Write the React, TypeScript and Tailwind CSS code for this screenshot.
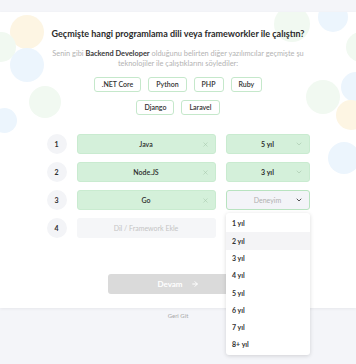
import { X, ChevronDown, ArrowRight } from "lucide-react";

const suggestions = [
  [".NET Core", "Python", "PHP", "Ruby"],
  ["Django", "Laravel"],
];

const rows = [
  { n: 1, lang: "Java", years: "5 yıl" },
  { n: 2, lang: "Node.JS", years: "3 yıl" },
  { n: 3, lang: "Go", years: null },
];

const yearOptions = ["1 yıl", "2 yıl", "3 yıl", "4 yıl", "5 yıl", "6 yıl", "7 yıl", "8+ yıl"];

// dekoratif arka plan daireleri
const bubbles = [
  { c: "bg-[#fdf5e3]", pos: "left-[10px] top-[3px] h-[34px] w-[34px]" },
  { c: "bg-[#f1f9f1]", pos: "left-[-14px] top-[20px] h-[30px] w-[30px]" },
  { c: "bg-[#ecf5fd]", pos: "left-[10px] top-[36px] h-[34px] w-[34px]" },
  { c: "bg-[#f1f9f1]", pos: "left-[29px] top-[74px] h-[32px] w-[32px]" },
  { c: "bg-[#ecf5fd]", pos: "left-[-8px] top-[96px] h-[25px] w-[25px]" },
  { c: "bg-[#f1f9f1]", pos: "left-[274px] top-[-6px] h-[36px] w-[36px]" },
  { c: "bg-[#ecf5fd]", pos: "left-[318px] top-[-10px] h-[30px] w-[30px]" },
  { c: "bg-[#f1f9f1]", pos: "left-[346px] top-[20px] h-[30px] w-[30px]" },
  { c: "bg-[#f1f9f1]", pos: "left-[306px] top-[68px] h-[34px] w-[34px]" },
  { c: "bg-[#ecf5fd]", pos: "left-[341px] top-[60px] h-[30px] w-[30px]" },
  { c: "bg-[#fdf5e3]", pos: "left-[336px] top-[88px] h-[30px] w-[30px]" },
  { c: "bg-[#ecf5fd]", pos: "left-[328px] top-[130px] h-[32px] w-[32px]" },
];

export default function App() {
  return (
    <div
      className="relative h-[364px] w-[356px] overflow-hidden bg-[#f4f5f9] text-[#2d2d2d]"
      style={{ fontFamily: "Lato, 'Noto Sans', sans-serif" }}
    >
      <div className="h-[12px]" />

      <div className="relative h-[296px] overflow-hidden bg-white shadow-[0_1px_3px_rgba(0,0,0,0.06)]">
        {bubbles.map((b, i) => (
          <div key={i} className={`absolute rounded-full ${b.c} ${b.pos}`} />
        ))}

        <div className="relative flex flex-col items-center pt-[16px]">
          <h1 className="text-[9px] font-bold leading-[12px] text-[#2b2b2b]">
            Geçmişte hangi programlama dili veya frameworkler ile çalıştın?
          </h1>
          <p className="mt-[9px] w-[262px] text-center text-[7.4px] leading-[10px] text-[#b3b3b3]">
            Senin gibi <span className="font-bold text-[#3a3a3a]">Backend Developer</span> olduğunu belirten diğer
            yazılımcılar geçmişte şu teknolojiler ile çalıştıklarını söylediler:
          </p>

          <div className="mt-[8px] flex flex-col items-center gap-[8px]">
            {suggestions.map((line, i) => (
              <div key={i} className="flex gap-[7px]">
                {line.map((s) => (
                  <span
                    key={s}
                    className="flex h-[15px] items-center rounded-[3px] border border-[#c5e8cb] bg-white px-[7px] text-[7px] font-semibold text-[#333]"
                  >
                    {s}
                  </span>
                ))}
              </div>
            ))}
          </div>

          <div className="mt-[19px] flex flex-col gap-[8px]">
            {rows.map((r) => (
              <div key={r.n} className="flex items-center gap-[10px]">
                <span className="flex h-[20px] w-[20px] items-center justify-center rounded-full bg-[#f3f4f7] text-[7px] font-bold">
                  {r.n}
                </span>
                <div className="relative flex h-[20px] w-[139px] items-center justify-center rounded-[3px] border border-[#c9ebd0] bg-[#d4f0da] text-[7px] font-semibold">
                  {r.lang}
                  <X className="absolute right-[6px] h-[7px] w-[7px] text-[#a9c9ae]" strokeWidth={2} />
                </div>
                {r.years ? (
                  <div className="relative flex h-[20px] w-[84px] items-center justify-center rounded-[3px] border border-[#c9ebd0] bg-[#d4f0da] text-[7px] font-bold">
                    {r.years}
                    <ChevronDown className="absolute right-[6px] h-[8px] w-[8px] text-[#a9c9ae]" strokeWidth={2} />
                  </div>
                ) : (
                  <div className="relative flex h-[20px] w-[84px] items-center justify-center rounded-[3px] border border-[#b8e3c0] bg-[#f3f4f8] text-[7px] text-[#b0b0b0]">
                    Deneyim
                    <ChevronDown className="absolute right-[6px] h-[8px] w-[8px] text-[#333]" strokeWidth={2.5} />
                  </div>
                )}
              </div>
            ))}
            <div className="flex items-center gap-[10px]">
              <span className="flex h-[20px] w-[20px] items-center justify-center rounded-full bg-[#f3f4f7] text-[7px] font-bold">
                4
              </span>
              <div className="flex h-[20px] w-[139px] items-center justify-center rounded-[3px] bg-[#f5f6f8] text-[7px] text-[#c4c4c4]">
                Dil / Framework Ekle
              </div>
              <div className="w-[84px]" />
            </div>
          </div>

          <button className="mt-[36px] flex h-[20px] w-[140px] items-center justify-center gap-[8px] rounded-[3px] bg-[#dadada] text-[8px] font-bold text-white">
            Devam
            <ArrowRight className="h-[8px] w-[8px]" strokeWidth={3} />
          </button>
        </div>
      </div>

      <div className="pt-[3px] text-center text-[6px] text-[#a7a7a7]">Geri Git</div>

      <div className="absolute left-[226px] top-[213px] w-[84px] rounded-[3px] bg-white py-[2px] shadow-[0_1px_4px_rgba(0,0,0,0.15)]">
        {yearOptions.map((y, i) => (
          <div
            key={y}
            className={`flex h-[17.3px] items-center px-[6px] text-[7px] font-bold text-[#333] ${i === 1 ? "bg-[#f4f4f6]" : ""}`}
          >
            {y}
          </div>
        ))}
      </div>
    </div>
  );
}
